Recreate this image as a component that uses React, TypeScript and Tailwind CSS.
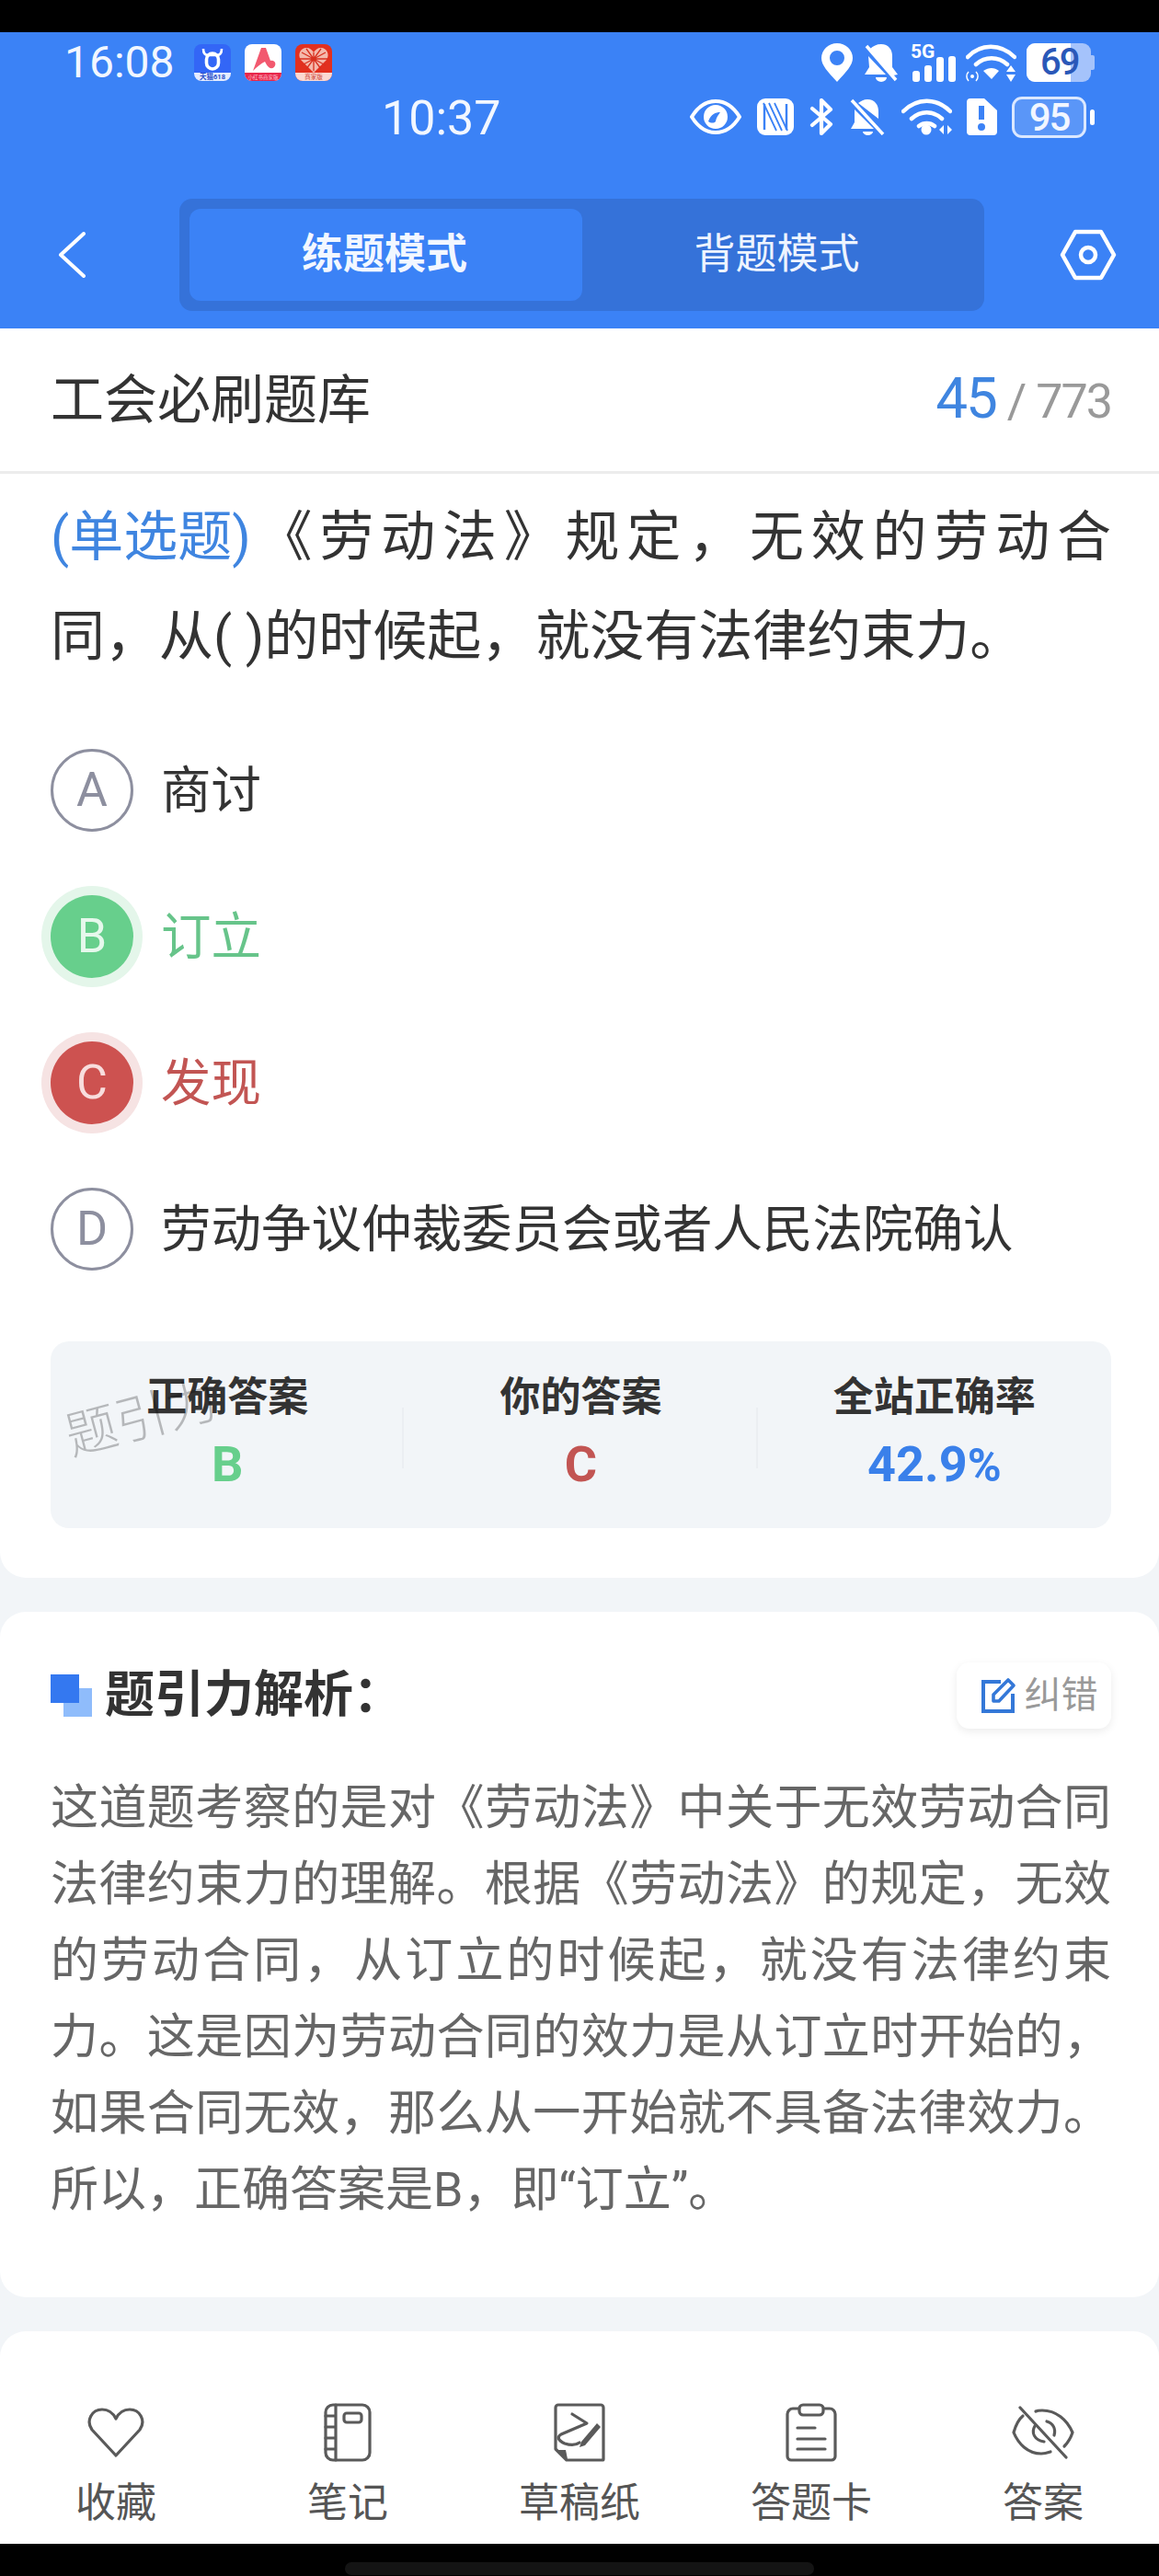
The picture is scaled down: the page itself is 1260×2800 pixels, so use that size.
import { ReactNode } from 'react'

function BullIcon() {
  return (
    <svg viewBox="0 0 40 40" className="h-[40px] w-[40px]">
      <rect width="40" height="40" rx="8" fill="#3366f6" />
      <path d="M0 31H40V32a8 8 0 0 1-8 8H8a8 8 0 0 1-8-8Z" fill="#e4ecff" />
      <path d="M10 5c0 5 2 7 5 7h10c3 0 5-2 5-7" fill="none" stroke="#fff" strokeWidth="2.6" />
      <rect x="13.5" y="10" width="13" height="17" rx="6.5" fill="none" stroke="#fff" strokeWidth="3.6" />
      <text x="20" y="38" textAnchor="middle" fontSize="7.5" fontWeight="700" fill="#2c50c9">天猫618</text>
    </svg>
  )
}

function RedAIcon() {
  return (
    <svg viewBox="0 0 40 40" className="h-[40px] w-[40px]">
      <rect width="40" height="40" rx="8" fill="#fff" />
      <path d="M0 31H40V32a8 8 0 0 1-8 8H8a8 8 0 0 1-8-8Z" fill="#e8274b" />
      <path d="M9 29 18 4h5l5 14c5-1 7 4 4 7-4 3-7 0-10-6-4 2-9 6-13 10Z" fill="#f2596f" />
      <text x="20" y="38" textAnchor="middle" fontSize="5.5" fill="#ffc4cf">小红书商家版</text>
    </svg>
  )
}

function HeartIcon() {
  return (
    <svg viewBox="0 0 40 40" className="h-[40px] w-[40px]">
      <rect width="40" height="40" rx="8" fill="#e2301f" />
      <path d="M0 31H40V32a8 8 0 0 1-8 8H8a8 8 0 0 1-8-8Z" fill="#fbd9d2" />
      <path d="M20 31 6 17c-4-6 0-13 6-13 4 0 6 2 8 5 2-3 4-5 8-5 6 0 10 7 6 13Z" fill="#f4b9ac" />
      <path d="M7 9l26 14M33 9 7 23M20 9v20M5 16h30M12 5l16 22M28 5 12 27" stroke="#d8301f" strokeWidth="1.3" />
      <text x="20" y="38" textAnchor="middle" fontSize="6.5" fill="#c9382a">商家版</text>
    </svg>
  )
}

function TopStatusIcons() {
  return (
    <div className="flex items-center h-[42px]">
      <svg viewBox="0 0 36 42" className="h-[42px] w-[36px]">
        <path fillRule="evenodd" d="M18 42C8 31 1 24 1 16a17 16 0 0 1 34 0c0 8-7 15-17 26Zm0-18a8 8 0 1 0 0-16 8 8 0 0 0 0 16Z" fill="#fff" />
      </svg>
      <svg viewBox="0 0 38 42" className="ml-[11px] h-[42px] w-[38px]">
        <path d="M19 1c8 0 12 6 12 13v12l6 8-5 1L7 6c3-3 7-5 12-5ZM5 14 24 34H1l5-8Z" fill="#fff" />
        <path d="M13 37h12a6 5 0 0 1-12 0Z" fill="#fff" />
        <path d="M3 3 35 40" stroke="#fff" strokeWidth="3.5" />
      </svg>
      <div className="relative ml-[13px] h-[42px] w-[50px]">
        <span className="absolute left-0 top-[-3px] text-[21px] leading-[24px] font-bold text-white">5G</span>
        <svg viewBox="0 0 50 42" className="absolute inset-0 h-[42px] w-[50px]">
          <rect x="2" y="30" width="8" height="12" rx="3" fill="#fff" />
          <rect x="15" y="24" width="8" height="18" rx="3" fill="#fff" />
          <rect x="28" y="15" width="8" height="27" rx="3" fill="#fff" />
          <rect x="41" y="14" width="8" height="28" rx="3" fill="#fff" />
        </svg>
      </div>
      <svg viewBox="0 0 55 42" className="ml-[10px] h-[42px] w-[55px]">
        <path d="M2 15C16 0 38 0 53 15M11 23c10-9 24-9 34 0" fill="none" stroke="#fff" strokeWidth="4.5" strokeLinecap="round" />
        <path d="M19 30c6-4 12-4 17 0l-8 9Z" fill="#fff" />
        <circle cx="7" cy="36" r="2" fill="#fff" />
        <path d="M3 31a7 7 0 0 0 0 10M11 31a7 7 0 0 1 0 10" fill="none" stroke="#fff" strokeWidth="1.5" />
        <path d="M49 24l5 7H44ZM49 42l5-8H44Z" fill="#fff" />
      </svg>
      <div className="relative ml-[11px] h-[42px] w-[74px]">
        <div className="absolute left-0 top-0 h-[42px] w-[70px] rounded-[9px] bg-[#a5c3fb]" />
        <div className="absolute left-0 top-0 h-[42px] w-[48px] rounded-l-[9px] bg-white" />
        <div className="absolute right-0 top-[13px] h-[16px] w-[4px] rounded-r-[2px] bg-[#a5c3fb]" />
        <span className="absolute left-[15px] top-0 text-[40px] leading-[42px] font-medium tracking-[-2px] text-[#2a58b8]">69</span>
      </div>
    </div>
  )
}

function SecondStatusIcons() {
  return (
    <div className="flex items-center h-[45px]">
      <svg viewBox="0 0 56 40" className="h-[40px] w-[56px]">
        <path d="M2 20C10 7 19 3 28 3s18 4 26 17c-8 13-17 17-26 17S10 33 2 20Z" fill="none" stroke="#fff" strokeWidth="4" />
        <path fillRule="evenodd" d="M28 7a13 13 0 1 1 0 26 13 13 0 0 1 0-26Zm-8 18c3-8 8-10 13-10-2 3-4 5-5 10-2 2-5 2-8 0Z" fill="#fff" />
      </svg>
      <svg viewBox="0 0 40 40" className="ml-[17px] h-[40px] w-[40px]">
        <rect width="40" height="40" rx="9" fill="#fff" />
        <path d="M8 6v28M32 6v28" stroke="#3b82f6" strokeWidth="2.4" />
        <path d="M13 5 27 35M19 5 33 35M7 5 21 35" stroke="#3b82f6" strokeWidth="1.8" />
      </svg>
      <svg viewBox="0 0 27 40" className="ml-[17px] h-[40px] w-[27px]">
        <path d="M3 11 23 28 13 38V2l10 10L3 29" fill="none" stroke="#fff" strokeWidth="4.2" strokeLinejoin="round" strokeLinecap="round" />
      </svg>
      <svg viewBox="0 0 39 40" className="ml-[17px] h-[40px] w-[39px]">
        <path d="M19 1c8 0 12 6 12 13v8L9 5c3-2 6-4 10-4ZM5 12 26 33H1l4-7Z" fill="#fff" />
        <path d="M14 36h11a5.5 4 0 0 1-11 0Z" fill="#fff" />
        <path d="M2 2 36 39" stroke="#fff" strokeWidth="3.5" />
      </svg>
      <svg viewBox="0 0 55 40" className="ml-[17px] h-[40px] w-[55px]">
        <path d="M2 14c15-15 36-15 51 0M11 22c10-9 23-9 33 0M19 30c5-4 12-4 17 0" fill="none" stroke="#fff" strokeWidth="4.5" strokeLinecap="round" />
        <circle cx="27" cy="34" r="5.5" fill="#fff" />
        <path d="M41 34l5-5v10ZM55 34l-5-5v10Z" fill="#fff" />
      </svg>
      <svg viewBox="0 0 34 40" className="ml-[15px] h-[40px] w-[34px]">
        <path fillRule="evenodd" d="M5 0h15l14 13v23a4 4 0 0 1-4 4H5a4 4 0 0 1-4-4V4a4 4 0 0 1 4-4Zm9 8v15h6V8Zm3 19a4 4 0 1 0 0 8 4 4 0 0 0 0-8Z" fill="#fff" />
      </svg>
      <div className="relative ml-[16px] h-[45px] w-[90px]">
        <div className="absolute left-0 top-0 flex h-[45px] w-[81px] items-center justify-center rounded-[11px] border-[3px] border-[#dbe8ff] bg-[#5a96f8] text-[42px] font-medium tracking-[-2px] text-[#f2f6ff]">
          95
        </div>
        <div className="absolute right-0 top-[14px] h-[17px] w-[5px] rounded-[3px] bg-white" />
      </div>
    </div>
  )
}

function Option({ letter, text, state }: { letter: string; text: string; state?: 'right' | 'wrong' }) {
  const circle =
    state === 'right'
      ? 'bg-[#67cf8c] shadow-[0_0_0_10px_#e4f6ea] text-[#e6f8ec]'
      : state === 'wrong'
        ? 'bg-[#cd5250] shadow-[0_0_0_10px_#f6e3e3] text-[#f8dddd]'
        : 'border-[3px] border-[#8d8f9f] text-[#8d8f9f]'
  const label = state === 'right' ? 'text-[#67c48a]' : state === 'wrong' ? 'text-[#c25553]' : 'text-[#333333]'
  return (
    <div className="flex h-[90px] items-center">
      <div className={`flex h-[90px] w-[90px] items-center justify-center rounded-full text-[52px] font-normal ${circle}`}>
        {letter}
      </div>
      <span className={`ml-[30px] text-[54.5px] leading-[70px] ${label}`}>{text}</span>
    </div>
  )
}

function Stat({ label, children, divider }: { label: string; children: ReactNode; divider?: boolean }) {
  return (
    <div className="relative flex flex-col items-center pt-[36px]">
      <span className="text-[44px] leading-[50px] font-bold text-[#333333]">{label}</span>
      <div className="mt-[20px] h-[56px] text-[54px] leading-[56px] font-bold">{children}</div>
      {divider && <div className="absolute right-0 top-[72px] h-[66px] w-[2px] bg-[#ebeef2]" />}
    </div>
  )
}

function ToolItem({ icon, label }: { icon: ReactNode; label: string }) {
  return (
    <div className="flex w-[252px] flex-col items-center">
      <div className="flex h-[64px] w-[80px] items-center justify-center">{icon}</div>
      <span className="mt-[19px] text-[44px] leading-[52px] text-[#555555]">{label}</span>
    </div>
  )
}

const iconStroke = { fill: 'none', stroke: '#5a5a5a', strokeWidth: 3.2, strokeLinecap: 'round', strokeLinejoin: 'round' } as const

export default function App() {
  return (
    <div className="flex h-[2800px] w-[1260px] flex-col overflow-hidden bg-[#f2f5f8] font-['Roboto','Noto_Sans_CJK_SC',sans-serif]">
      <div className="h-[35px] bg-black" />

      <header className="flex h-[322px] flex-col bg-[#3b82f6]">
        <div className="flex items-center justify-between pl-[70px] pr-[70px] pt-[12px]">
          <div className="flex items-center">
            <span className="w-[141px] text-[48px] leading-[42px] text-[#f2f7ff]">16:08</span>
            <div className="flex gap-[15px]">
              <BullIcon />
              <RedAIcon />
              <HeartIcon />
            </div>
          </div>
          <TopStatusIcons />
        </div>
        <div className="mt-[14px] flex items-center justify-between pl-[415px] pr-[70px]">
          <span className="pt-[3px] text-[52px] leading-[45px] text-[#f2f7ff]">10:37</span>
          <SecondStatusIcons />
        </div>
        <div className="mt-[65px] flex items-center">
          <div className="flex w-[195px] items-center pl-[63px]">
            <svg viewBox="0 0 30 50" className="h-[50px] w-[30px]">
              <path d="M28 2 3 25l25 23" fill="none" stroke="#fff" strokeWidth="4" strokeLinecap="round" strokeLinejoin="round" />
            </svg>
          </div>
          <div className="flex h-[122px] w-[875px] rounded-[14px] bg-[#3572d9] p-[11px]">
            <div className="flex w-[427px] items-center justify-center rounded-[12px] bg-[#3b82f6] pr-[3px] text-[45px] font-bold text-[#f2f7ff]">
              练题模式
            </div>
            <div className="flex flex-1 items-center justify-center pr-[3px] text-[45px] text-[#eef4ff]">背题模式</div>
          </div>
          <div className="ml-[82px]">
            <svg viewBox="0 0 62 56" className="h-[56px] w-[62px]">
              <path d="M17 3h28l14 25-14 25H17L3 28Z" fill="none" stroke="#fff" strokeWidth="4.5" strokeLinejoin="round" />
              <circle cx="31" cy="28" r="8" fill="none" stroke="#fff" strokeWidth="4.5" />
            </svg>
          </div>
        </div>
      </header>

      <div className="flex h-[158px] items-center justify-between border-b-[3px] border-[#ececec] bg-white pl-[55px] pr-[52px]">
        <span className="text-[58px] leading-[70px] text-[#333333]">工会必刷题库</span>
        <div className="flex items-baseline">
          <span className="text-[62px] leading-[70px] tracking-[-2px] text-[#3f85e0]">45</span>
          <span className="ml-[12px] text-[52px] leading-[70px] text-[#999999]">/</span>
          <span className="ml-[10px] text-[52px] leading-[70px] tracking-[-2px] text-[#999999]">773</span>
        </div>
      </div>

      <section className="rounded-b-[28px] bg-white pb-[54px] pl-[55px] pr-[52px] pt-[15px]">
        <p className="text-justify text-[59px] leading-[108px] text-[#333333]">
          <span className="inline-block text-[#3f85e0]">(单选题)</span>《劳动法》规定，无效的劳动合同，从( )的时候起，就没有法律约束力。
        </p>
        <div className="mt-[68px] flex flex-col gap-[69px]">
          <Option letter="A" text="商讨" />
          <Option letter="B" text="订立" state="right" />
          <Option letter="C" text="发现" state="wrong" />
          <Option letter="D" text="劳动争议仲裁委员会或者人民法院确认" />
        </div>
        <div className="relative mt-[77px] grid h-[203px] grid-cols-3 rounded-[20px] bg-[#f2f5f8]">
          <Stat label="正确答案" divider>
            <span className="text-[#67cf8c]">B</span>
          </Stat>
          <Stat label="你的答案" divider>
            <span className="text-[#c25553]">C</span>
          </Stat>
          <Stat label="全站正确率">
            <span className="text-[#3a80ea]">
              42.9<span className="text-[50px]">%</span>
            </span>
          </Stat>
          <span className="absolute left-[15px] top-[54px] -rotate-[15deg] text-[56px] leading-[60px] font-light text-[#000000]/25">
            题引力
          </span>
        </div>
      </section>

      <section className="mt-[37px] rounded-[28px] bg-white pb-[75px] pl-[55px] pr-[52px] pt-[55px]">
        <div className="flex h-[72px] items-center justify-between">
          <div className="flex items-center">
            <div className="relative h-[46px] w-[45px]">
              <div className="absolute bottom-0 right-0 h-[31px] w-[31px] bg-[#8fbcfb]" />
              <div className="absolute left-0 top-0 h-[31px] w-[31px] bg-[#3478f0]" />
            </div>
            <h2 className="ml-[14px] text-[54px] leading-[72px] font-bold text-[#333333]">题引力解析：</h2>
          </div>
          <div className="flex h-[72px] w-[168px] items-center justify-center rounded-[14px] bg-white pl-[11px] shadow-[0_3px_10px_rgba(0,0,0,0.08)]">
            <svg viewBox="0 0 40 40" className="h-[40px] w-[40px]">
              <path d="M22 5H3v32h32V18" fill="none" stroke="#3478d8" strokeWidth="4" />
              <path d="M14 26v-7L30 3l6 6-16 17Z" fill="none" stroke="#3478d8" strokeWidth="3.6" strokeLinejoin="round" />
            </svg>
            <span className="ml-[8px] text-[40px] leading-[50px] text-[#999999]">纠错</span>
          </div>
        </div>
        <p className="mt-[45px] text-justify text-[52px] leading-[83px] text-[#666666]">
          这道题考察的是对《劳动法》中关于无效劳动合同法律约束力的理解。根据《劳动法》的规定，无效的劳动合同，从订立的时候起，就没有法律约束力。这是因为劳动合同的效力是从订立时开始的，如果合同无效，那么从一开始就不具备法律效力。所以，正确答案是B，即“订立”。
        </p>
      </section>

      <nav className="mt-[37px] flex h-[231px] items-start rounded-t-[28px] bg-white pt-[78px]">
        <ToolItem
          label="收藏"
          icon={
            <svg viewBox="0 0 64 56" className="h-[56px] w-[64px]">
              <path d="M32 53 6 25C-1 15 6 3 17 3c7 0 12 4 15 10 3-6 8-10 15-10 11 0 18 12 11 22Z" {...iconStroke} />
            </svg>
          }
        />
        <ToolItem
          label="笔记"
          icon={
            <svg viewBox="0 0 52 64" className="h-[64px] w-[52px]">
              <rect x="2" y="2" width="48" height="60" rx="8" {...iconStroke} />
              <path d="M13 2v60M2 14h11M2 26h11M2 38h11M2 50h11" {...iconStroke} />
              <rect x="22" y="11" width="19" height="10" rx="3" {...iconStroke} />
            </svg>
          }
        />
        <ToolItem
          label="草稿纸"
          icon={
            <svg viewBox="0 0 56 64" className="h-[64px] w-[56px]">
              <path d="M2 50V5a3 3 0 0 1 3-3h46a3 3 0 0 1 3 3v56a1 1 0 0 1-1 1H14Z" {...iconStroke} />
              <path d="M3 51h10l2 10Z" fill="#5a5a5a" />
              <path d="M20 12 36 22 8 34c-5 3-3 7 4 10 6 2 12 2 16-1" {...iconStroke} />
              <path d="M30 42 47 22l4 4-17 20-6 2Z" fill="#5a5a5a" />
            </svg>
          }
        />
        <ToolItem
          label="答题卡"
          icon={
            <svg viewBox="0 0 56 64" className="h-[64px] w-[56px]">
              <path d="M14 6H8a6 6 0 0 0-6 6v46a4 4 0 0 0 4 4h44a4 4 0 0 0 4-4V12a6 6 0 0 0-6-6h-6" {...iconStroke} />
              <rect x="15" y="2" width="26" height="11" rx="4" {...iconStroke} />
              <path d="M13 27h19M13 39h30M13 50h30" {...iconStroke} />
            </svg>
          }
        />
        <ToolItem
          label="答案"
          icon={
            <svg viewBox="0 0 70 58" className="h-[58px] w-[70px]">
              <path d="M13 11C8 15 5 22 3 29c5 12 15 23 30 23 4 0 7-1 10-2M27 6c2-1 4-1 7-1 15 0 27 10 33 24-2 6-5 11-9 15" {...iconStroke} />
              <path d="M10 2 60 56" {...iconStroke} />
              <path d="M26 22c-4 7-1 15 10 17M39 17c7 2 10 8 8 15" {...iconStroke} />
            </svg>
          }
        />
      </nav>

      <footer className="relative flex-1 bg-black">
        <div className="absolute left-[375px] top-[20px] h-[14px] w-[510px] rounded-full bg-[#141414]" />
      </footer>
    </div>
  )
}
